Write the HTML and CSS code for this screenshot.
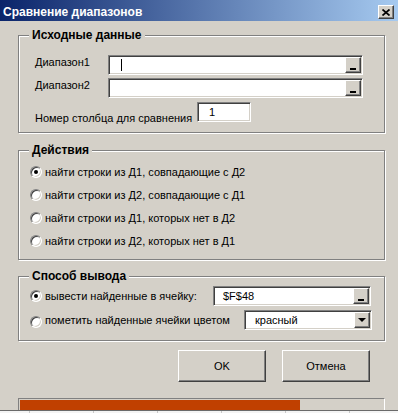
FILE: index.html
```html
<!DOCTYPE html>
<html>
<head>
    <title>Сравнение диапазонов</title>
    <link rel="stylesheet" href="styles.css">
</head>
<body>
    <div class="window">
        <div class="titlebar">
            <span class="title">Сравнение диапазонов</span>
            <span class="close-btn">
                <svg width="8" height="7" viewBox="0 0 8 7"><path d="M0.5 0.5L7.5 6.5M7.5 0.5L0.5 6.5" stroke="#000" stroke-width="1.7"/></svg>
            </span>
        </div>

        <div class="client">
            <div class="group group-source">
                <span class="group-title">Исходные данные</span>
                <div class="field-row">
                    <label class="field-label">Диапазон1</label>
                    <div class="ref-edit"><span class="caret"></span><span class="ref-btn"><i></i></span></div>
                </div>
                <div class="field-row row-gap">
                    <label class="field-label">Диапазон2</label>
                    <div class="ref-edit"><span class="ref-btn"><i></i></span></div>
                </div>
                <div class="field-row row-number">
                    <label class="field-label label-number">Номер столбца для сравнения</label>
                    <div class="text-box number-box">1</div>
                </div>
            </div>

            <div class="group group-actions">
                <span class="group-title">Действия</span>
                <div class="radio-row"><span class="radio checked"></span>найти строки из Д1, совпадающие с Д2</div>
                <div class="radio-row"><span class="radio"></span>найти строки из Д2, совпадающие с Д1</div>
                <div class="radio-row"><span class="radio"></span>найти строки из Д1, которых нет в Д2</div>
                <div class="radio-row"><span class="radio"></span>найти строки из Д2, которых нет в Д1</div>
            </div>

            <div class="group group-output">
                <span class="group-title">Способ вывода</span>
                <div class="output-row">
                    <span class="radio checked"></span>вывести найденные в ячейку:
                    <div class="ref-edit output-ref"><span class="ref-text">$F$48</span><span class="ref-btn"><i></i></span></div>
                </div>
                <div class="output-row row-gap-lg">
                    <span class="radio radio-low"></span>пометить найденные ячейки цветом
                    <div class="combo"><span class="combo-text">красный</span><span class="combo-btn"><i></i></span></div>
                </div>
            </div>

            <div class="buttons">
                <button class="btn">OK</button>
                <button class="btn">Отмена</button>
            </div>

            <div class="progress"><div class="progress-fill" style="width: 280px"></div></div>
        </div>
    </div>
    <div class="sheet"></div>
</body>
</html>
```

FILE: styles.css
```css
body {
    margin: 0;
    background: #d4d0c8;
    font-family: "Liberation Sans", Arial, sans-serif;
    font-size: 11px;
    color: #000;
}
.window {
    width: 398px;
    height: 410px;
    background: #d4d0c8;
    overflow: hidden;
}
.titlebar {
    height: 21px;
    display: flex;
    justify-content: space-between;
    align-items: flex-start;
    padding: 0 4px 0 3px;
    background: linear-gradient(to right, #0a246a, #a6caf0);
}
.title {
    color: #fff;
    font-size: 12px;
    font-weight: bold;
    line-height: 14px;
    margin-top: 5px;
}
.close-btn {
    width: 16px;
    height: 14px;
    margin-top: 5px;
    box-sizing: border-box;
    display: flex;
    align-items: center;
    justify-content: center;
    background: #d4d0c8;
    border: 1px solid;
    border-color: #fff #404040 #404040 #fff;
    box-shadow: inset -1px -1px 0 #808080;
}

.client {
    padding: 14px 13px 0 18px;
}
.group {
    position: relative;
    border: 1px solid #808080;
    box-shadow: inset 1px 1px 0 #fff, 1px 1px 0 #fff;
}
.group-title {
    position: absolute;
    top: -8px;
    left: 10px;
    padding: 0 3px;
    background: #d4d0c8;
    font-size: 12px;
    font-weight: bold;
    line-height: 14px;
}

/* исходные данные */
.group-source {
    padding: 19px 21px 10px 16px;
}
.field-row {
    display: flex;
    align-items: flex-start;
    height: 20px;
}
.row-gap { margin-top: 3px; }
.row-number { margin-top: 4px; }
.field-label {
    width: 73px;
    line-height: 14px;
}
.label-number {
    width: 162px;
    margin-top: 9px;
}
.ref-edit, .text-box, .combo {
    position: relative;
    box-sizing: border-box;
    height: 20px;
    background: #fff;
    border: 1px solid;
    border-color: #808080 #fff #fff #808080;
    box-shadow: inset 1px 1px 0 #404040, inset -1px -1px 0 #d4d0c8;
    display: flex;
    align-items: center;
}
.ref-edit {
    width: 255px;
}
.caret {
    width: 1px;
    height: 12px;
    margin-left: 12px;
    background: #000;
}
.ref-btn, .combo-btn {
    position: absolute;
    right: 1px;
    top: 1px;
    bottom: 1px;
    width: 16px;
    box-sizing: border-box;
    background: #d4d0c8;
    border: 1px solid;
    border-color: #fff #404040 #404040 #fff;
    box-shadow: inset -1px -1px 0 #808080;
    display: flex;
    justify-content: center;
}
.ref-btn i {
    width: 6px;
    height: 2px;
    margin-top: 10px;
    background: #000;
}
.number-box {
    width: 54px;
    padding-left: 11px;
}

/* действия */
.group-actions {
    margin-top: 17px;
    padding: 9px 10px 7px 11px;
}
.radio-row, .output-row {
    display: flex;
    align-items: center;
    height: 23px;
}
.radio {
    position: relative;
    flex: none;
    width: 12px;
    height: 12px;
    margin-right: 3px;
    box-sizing: border-box;
    border-radius: 50%;
    background: #fff;
    border: 1px solid;
    border-color: #808080 #fff #fff #808080;
    box-shadow: inset 1px 1px 0 #404040, inset -1px -1px 0 #d4d0c8;
}
.radio.checked::after {
    content: "";
    position: absolute;
    left: 3px;
    top: 3px;
    width: 4px;
    height: 4px;
    border-radius: 50%;
    background: #000;
}

/* способ вывода */
.group-output {
    margin-top: 16px;
    padding: 9px 12px 10px 11px;
}
.output-row {
    height: 20px;
}
.row-gap-lg { margin-top: 4px; }
.radio-low { margin-top: 4px; }
.output-ref {
    width: 158px;
    margin-left: auto;
    margin-right: 1px;
}
.ref-text {
    padding-left: 9px;
}
.combo {
    width: 128px;
    margin-left: auto;
}
.combo-text {
    padding-left: 10px;
}
.combo-btn {
    align-items: center;
}
.combo-btn i {
    width: 0;
    height: 0;
    border-left: 4px solid transparent;
    border-right: 4px solid transparent;
    border-top: 4px solid #000;
}

/* кнопки */
.buttons {
    display: flex;
    gap: 16px;
    margin-top: 9px;
    padding-left: 160px;
}
.btn {
    width: 88px;
    height: 32px;
    padding: 0;
    font-family: inherit;
    font-size: 11px;
    background: #d4d0c8;
    border: 1px solid;
    border-color: #fff #404040 #404040 #fff;
    box-shadow: inset -1px -1px 0 #808080;
}

.progress {
    margin-top: 16px;
    height: 14px;
    padding: 1px;
    border: 1px solid;
    border-color: #808080 #fff #fff #808080;
}
.progress-fill {
    height: 10px;
    background: #c04000;
}

.sheet {
    height: 2px;
    border-top: 1px solid #6a6a6a;
    background: #f4f4f4 repeating-linear-gradient(to right, transparent 0 29px, #c8c8c8 29px 30px, transparent 30px 64px);
}
```
